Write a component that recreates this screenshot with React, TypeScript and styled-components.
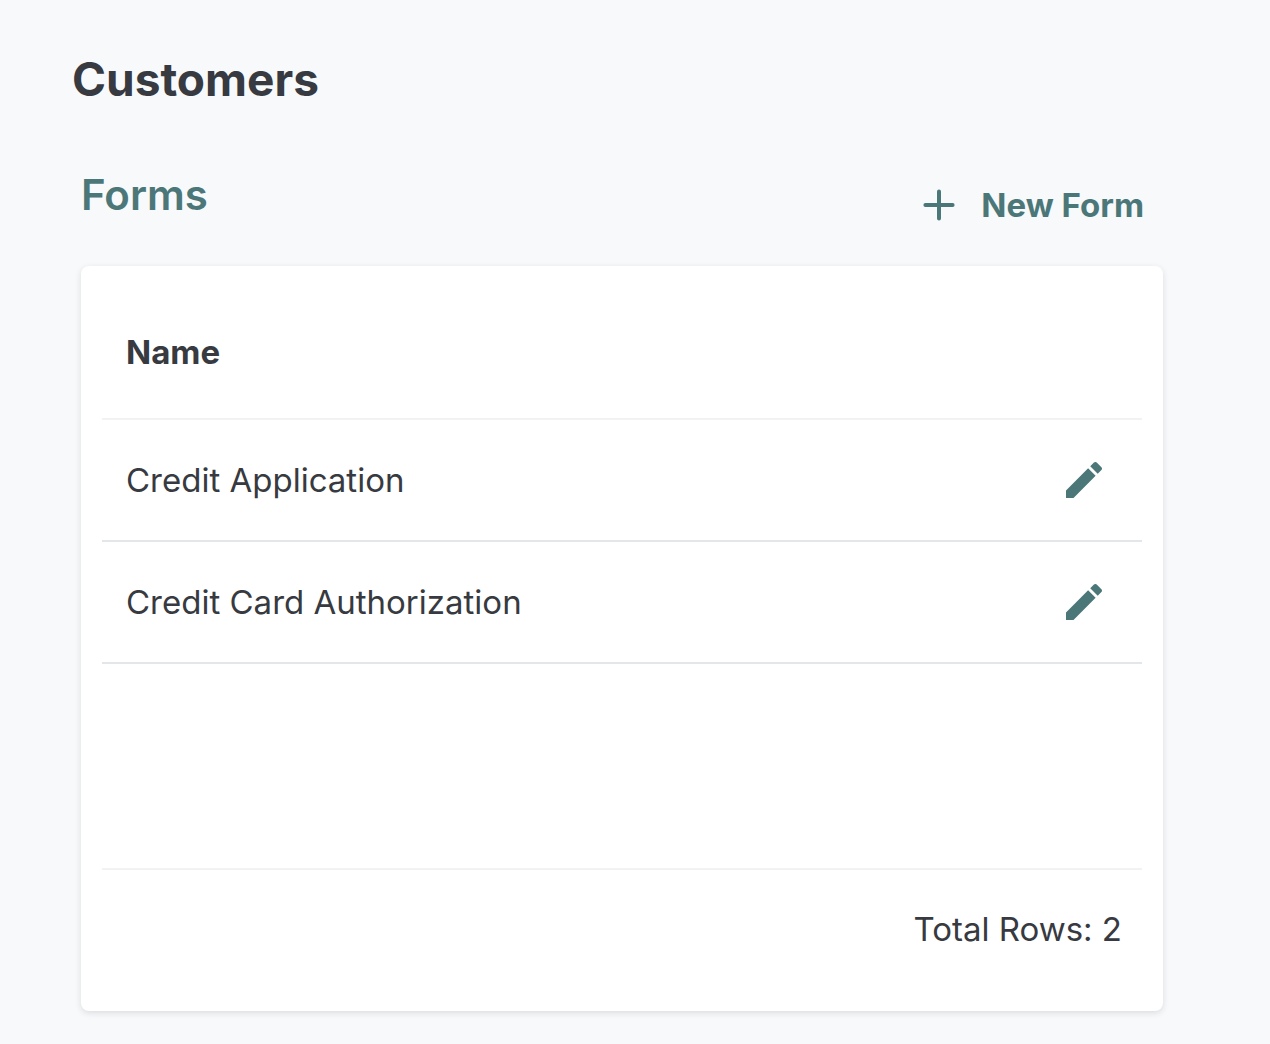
import React from "react";
import styled, { createGlobalStyle } from "styled-components";

const GlobalStyle = createGlobalStyle`
  * {
    box-sizing: border-box;
  }

  body {
    margin: 0;
    background: #f8f9fb;
    color: #373a40;
    font-family: Inter, "Liberation Sans", sans-serif;
  }
`;

const Page = styled.main`
  padding: 47px 107px 32px 72px;
`;

const PageTitle = styled.h1`
  margin: 0;
  font-size: 46px;
  line-height: 64px;
  font-weight: 700;
`;

const Section = styled.section`
  margin-top: 56px;
  padding-left: 9px;
`;

const SectionHeader = styled.header`
  display: flex;
  justify-content: space-between;
  align-items: flex-start;
  height: 99px;
`;

const SectionTitle = styled.h2`
  margin: 0;
  color: #4c7779;
  font-size: 42px;
  line-height: 56px;
  font-weight: 600;
`;

const NewButton = styled.button`
  display: flex;
  align-items: center;
  gap: 26px;
  margin: 14px 19px 0 0;
  padding: 0;
  border: 0;
  background: none;
  color: #4c7779;
  font: inherit;
  font-size: 33px;
  line-height: 48px;
  font-weight: 700;
  cursor: pointer;
`;

const Card = styled.div`
  padding: 20px 21px;
  border-radius: 8px;
  background: #fff;
  box-shadow: 0 2px 6px rgba(40, 50, 60, 0.14);
`;

const Table = styled.table`
  width: 100%;
  border-collapse: separate;
  border-spacing: 0;
  font-size: 33px;
  line-height: 48px;
`;

const HeadCell = styled.th`
  height: 134px;
  padding: 0 24px;
  border-bottom: 2px solid #f1f2f3;
  font-weight: 700;
  text-align: left;
`;

const Cell = styled.td<{ $action?: boolean }>`
  height: 122px;
  padding: ${(p) => (p.$action ? "0 40px 0 0" : "0 24px")};
  border-bottom: 2px solid #e4e7ea;
`;

const IconButton = styled.button`
  display: flex;
  margin-left: auto;
  padding: 0;
  border: 0;
  background: none;
  color: #4c7779;
  cursor: pointer;
`;

const TableFooter = styled.footer`
  margin-top: 204px;
  padding: 35px 20px 38px;
  border-top: 2px solid #f1f2f3;
  font-size: 33px;
  line-height: 48px;
  text-align: right;
`;

const PlusIcon = () => (
  <svg width="32" height="32" viewBox="0 0 32 32" fill="none" stroke="currentColor" strokeWidth="4" strokeLinecap="round" aria-hidden="true">
    <path d="M16 2.4v27.2M2.4 16h27.2" />
  </svg>
);

const PencilIcon = () => (
  <svg width="36" height="36" viewBox="3 3 18 18" fill="currentColor" aria-hidden="true">
    <path d="M20.71 7.04c.39-.39.39-1.04 0-1.41l-2.34-2.34c-.37-.39-1.02-.39-1.41 0l-1.84 1.83 3.75 3.75M3 17.25V21h3.75L17.81 9.93l-3.75-3.75L3 17.25Z" />
  </svg>
);

const forms = ["Credit Application", "Credit Card Authorization"];

export default function App() {
  return (
    <>
      <GlobalStyle />
      <Page>
        <PageTitle>Customers</PageTitle>
        <Section>
          <SectionHeader>
            <SectionTitle>Forms</SectionTitle>
            <NewButton type="button">
              <PlusIcon />
              New Form
            </NewButton>
          </SectionHeader>
          <Card>
            <Table>
              <thead>
                <tr>
                  <HeadCell scope="col" colSpan={2}>
                    Name
                  </HeadCell>
                </tr>
              </thead>
              <tbody>
                {forms.map((name) => (
                  <tr key={name}>
                    <Cell>{name}</Cell>
                    <Cell $action>
                      <IconButton type="button" aria-label={`Edit ${name}`}>
                        <PencilIcon />
                      </IconButton>
                    </Cell>
                  </tr>
                ))}
              </tbody>
            </Table>
            <TableFooter>Total Rows: {forms.length}</TableFooter>
          </Card>
        </Section>
      </Page>
    </>
  );
}
